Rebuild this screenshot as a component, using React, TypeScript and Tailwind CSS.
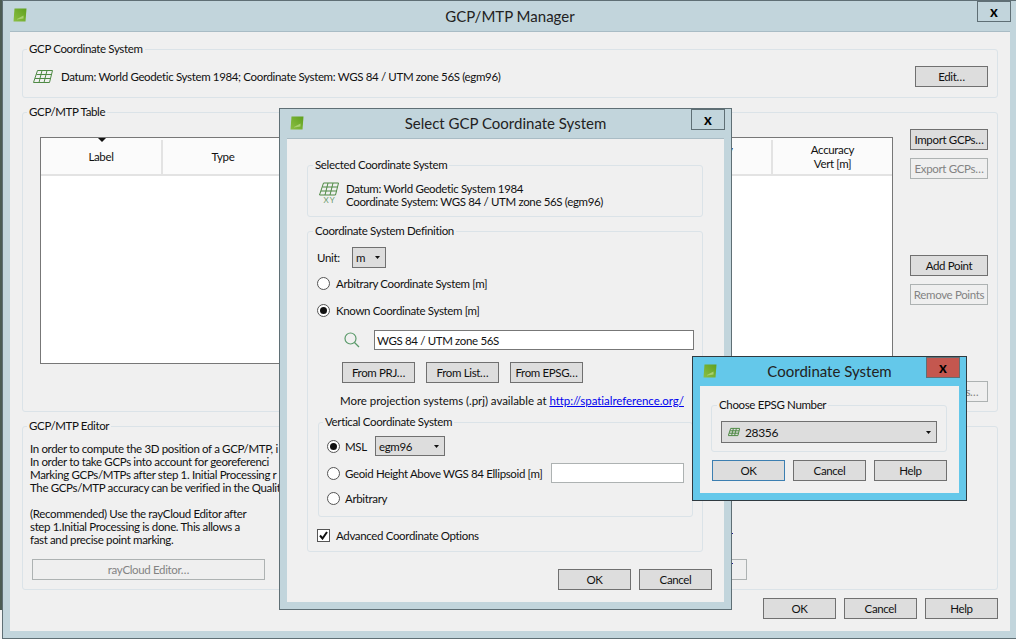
import type { ReactNode } from "react";

function Logo() {
  return (
    <svg width="14" height="14" viewBox="0 0 14 14" className="shrink-0">
      <defs>
        <linearGradient id="lg" x1="0" y1="1" x2="1" y2="0">
          <stop offset="0" stopColor="#8cbf45" />
          <stop offset="1" stopColor="#5fa01e" />
        </linearGradient>
      </defs>
      <polygon points="1.5,0.5 13.5,0.5 12.5,13.5 0.5,13.5" fill="url(#lg)" />
      <polygon points="4,11 10.5,7.5 10.5,10.5 4,11.5" fill="#a8d070" />
    </svg>
  );
}

function GridIcon({ w = 20, h = 13 }: { w?: number; h?: number }) {
  return (
    <svg width={w} height={h} viewBox="0 0 20 13" className="shrink-0" fill="none" stroke="#4f8a45" strokeWidth="1">
      <path vectorEffect="non-scaling-stroke" d="M4.5 .5H19.5L16.5 12.5H.5Z" />
      <path vectorEffect="non-scaling-stroke" d="M3.5 4.5H18.5M2 8.5H17.5M9 .5L6 12.5M14 .5L11 12.5" />
    </svg>
  );
}

function Arrow() {
  return (
    <svg width="5" height="3" viewBox="0 0 5 3" className="shrink-0">
      <polygon points="0,0 5,0 2.5,3" fill="#111" />
    </svg>
  );
}

function Btn(props: { children?: ReactNode; w?: string; disabled?: boolean; focus?: boolean }) {
  const { children, w = "w-[73px]", disabled, focus } = props;
  const tone = disabled
    ? "border-[#adb2b2] bg-[#efefef] text-[#838383]"
    : focus
      ? "border-[#3c7fb1] bg-[#dddddd] text-[#111]"
      : "border-[#707070] bg-[#dddddd] text-[#111]";
  return (
    <div className={`flex h-[21px] shrink-0 items-center justify-center whitespace-nowrap border ${w} ${tone}`}>
      {children}
    </div>
  );
}

function Group(props: { title: string; className?: string; legend?: string; children: ReactNode }) {
  return (
    <fieldset className={`relative min-w-0 rounded-[3px] border border-[#dbe3e8] ${props.className ?? ""}`}>
      <legend className={`h-4 px-[2px] leading-4 ${props.legend ?? "ml-[4px]"}`}>{props.title}</legend>
      {props.children}
    </fieldset>
  );
}

function Radio({ checked }: { checked?: boolean }) {
  return (
    <span className="flex h-[13px] w-[13px] shrink-0 items-center justify-center rounded-full border border-[#555] bg-white">
      {checked && <span className="h-[7px] w-[7px] rounded-full bg-[#111]" />}
    </span>
  );
}

function Combo({ label, w }: { label: string; w: string }) {
  return (
    <div className={`flex items-center justify-between border border-[#707070] bg-[#dddddd] pl-[3px] pr-[5px] ${w}`}>
      <span>{label}</span>
      <Arrow />
    </div>
  );
}

function Close({ red }: { red?: boolean }) {
  return (
    <div
      className={`flex h-[21px] w-[34px] items-center justify-center border border-[#5f6f75] text-[15px] font-bold leading-none text-black ${
        red ? "bg-[#c4574f]" : "bg-[#c2d5dc]"
      }`}
    >
      x
    </div>
  );
}

const columns = [["Label"], ["Type"], [], [], [], ["Accuracy", "Hor [m]"], ["Accuracy", "Vert [m]"]];

export default function App() {
  return (
    <div className="relative h-[639px] w-[1016px] overflow-hidden bg-[#f4f4f4] font-['Lato',sans-serif] text-[11.5px] leading-[13px] tracking-[-0.35px] text-[#111]">
      <div className="absolute left-0 top-0 h-[610px] w-[2px] bg-[#4c5c54]" />

      {/* main window */}
      <div className="absolute left-[2px] top-0 flex h-[639px] w-[1014px] flex-col border-y border-l border-[#5f6f75] bg-[#c2d5dc] pb-[7px] pl-[7px] pr-[6px]">
        <div className="relative flex h-[30px] shrink-0 items-center justify-center text-[15px] tracking-normal">
          <div className="absolute left-[3px] top-[7px]">
            <Logo />
          </div>
          <span className="text-[#222]">GCP/MTP Manager</span>
          <div className="absolute right-[-1px] top-0">
            <Close />
          </div>
        </div>
        <div className="flex flex-1 flex-col border-t border-[#a9bcc5] bg-[#f0f0f0] px-3 pt-[9px]">
          <Group title="GCP Coordinate System" className="h-[57px] shrink-0">
            <div className="flex items-start justify-between pr-[9px] pt-[9px]">
              <div className="flex items-center gap-[8px] pl-[10px] pt-[4px]">
                <GridIcon />
                <span className="whitespace-nowrap">
                  Datum: World Geodetic System 1984; Coordinate System: WGS 84 / UTM zone 56S (egm96)
                </span>
              </div>
              <Btn>Edit…</Btn>
            </div>
          </Group>

          <Group title="GCP/MTP Table" className="mt-[6px] h-[308px] shrink-0">
            <div className="flex justify-between pl-[17px] pr-[9px]">
              <div className="mt-[17px] h-[227px] w-[853px] border border-[#777] bg-white">
                <div className="relative grid h-[38px] grid-cols-[repeat(6,122px)_1fr] border-b-2 border-[#e3e3e3] bg-[#fbfbfb] pt-[2px]">
                  {columns.map((c, i) => (
                    <div
                      key={i}
                      className={`flex flex-col items-center justify-center leading-[14px] ${i < 6 ? "border-r-2 border-[#e3e3e3]" : ""}`}
                    >
                      {c.map((t) => (
                        <span key={t}>{t}</span>
                      ))}
                    </div>
                  ))}
                  <svg width="8" height="4" viewBox="0 0 8 4" className="absolute left-[57px] top-0">
                    <polygon points="0,0 8,0 4,4" fill="#111" />
                  </svg>
                </div>
              </div>
              <div className="flex w-[78px] flex-col pt-[9px]">
                <Btn w="w-[78px]">Import GCPs…</Btn>
                <div className="mt-2">
                  <Btn w="w-[78px]" disabled>
                    Export GCPs…
                  </Btn>
                </div>
                <div className="mt-[76px]">
                  <Btn w="w-[78px]">Add Point</Btn>
                </div>
                <div className="mt-2">
                  <Btn w="w-[78px]" disabled>
                    Remove Points
                  </Btn>
                </div>
                <div className="mt-[76px] flex justify-end">
                  <Btn w="w-[78px]" disabled>
                    Edit Marks…
                  </Btn>
                </div>
              </div>
            </div>
          </Group>

          <Group title="GCP/MTP Editor" className="mt-[6px] h-[172px] shrink-0">
            <div className="w-[262px] overflow-hidden whitespace-nowrap pl-[7px] pt-[8px]">
              <p>In order to compute the 3D position of a GCP/MTP, i</p>
              <p>In order to take GCPs into account for georeferenci</p>
              <p>Marking GCPs/MTPs after step 1. Initial Processing r</p>
              <p>The GCPs/MTP accuracy can be verified in the Qualit</p>
              <p className="mt-[13px]">(Recommended) Use the rayCloud Editor after</p>
              <p>step 1.Initial Processing is done. This allows a</p>
              <p>fast and precise point marking.</p>
            </div>
            <div className="mt-[13px] flex justify-between pl-[9px] pr-[250px]">
              <Btn w="w-[233px]" disabled>
                rayCloud Editor…
              </Btn>
              <Btn w="w-[233px]" disabled />
            </div>
            <span className="absolute left-[709px] top-[99px] h-px w-px bg-[#1a1a8c]" />
            <span className="absolute left-[709px] top-[129px] h-px w-px bg-[#1a1a8c]" />
          </Group>

          <div className="mt-2 flex justify-end gap-2">
            <Btn>OK</Btn>
            <Btn>Cancel</Btn>
            <Btn>Help</Btn>
          </div>
        </div>
      </div>

      {/* Select GCP Coordinate System dialog */}
      <div className="absolute left-[279px] top-[108px] flex h-[502px] w-[453px] flex-col border border-[#5f6f75] bg-[#c2d5dc] pb-[7px] pl-[7px] pr-[7px]">
        <div className="relative flex h-[29px] shrink-0 items-center justify-center text-[15px] tracking-normal">
          <div className="absolute left-[3px] top-[7px]">
            <Logo />
          </div>
          <span className="text-[#222]">Select GCP Coordinate System</span>
          <div className="absolute right-[-1px] top-0">
            <Close />
          </div>
        </div>
        <div className="flex flex-1 flex-col border-t border-[#a9bcc5] bg-[#f0f0f0] pl-[20px] pr-[12px] pt-[18px]">
          <Group title="Selected Coordinate System" legend="ml-[5px]" className="mr-[9px] h-[60px] shrink-0">
            <div className="flex items-start gap-[7px] pl-[11px] pt-[9px]">
              <div className="flex w-[20px] flex-col items-center">
                <GridIcon w={20} h={14} />
                <span className="text-[8px] leading-[8px] text-[#6a9a6a]">X Y</span>
              </div>
              <div className="whitespace-nowrap">
                <p>Datum: World Geodetic System 1984</p>
                <p>Coordinate System: WGS 84 / UTM zone 56S (egm96)</p>
              </div>
            </div>
          </Group>

          <Group title="Coordinate System Definition" legend="ml-[5px]" className="mr-[9px] mt-[6px] h-[329px] shrink-0">
            <div className="flex flex-col pl-[9px]">
              <div className="mt-2 flex h-[21px] items-center">
                <span className="w-[35px]">Unit:</span>
                <Combo label="m" w="h-[21px] w-[34px]" />
              </div>
              <div className="mt-[7px] flex h-4 items-center gap-[6px]">
                <Radio />
                <span>Arbitrary Coordinate System [m]</span>
              </div>
              <div className="mt-[11px] flex h-4 items-center gap-[6px]">
                <Radio checked />
                <span>Known Coordinate System [m]</span>
              </div>
              <div className="mt-3 flex h-[20px] items-center pl-[27px]">
                <svg width="16" height="16" viewBox="0 0 16 16" fill="none" stroke="#5a9a6a" strokeWidth="1.2">
                  <circle cx="6.5" cy="6.5" r="5.5" />
                  <path d="M10.5 10.5L15 15" />
                </svg>
                <div className="ml-[14px] flex h-[20px] w-[320px] items-center border border-[#777] bg-white pl-[2px]">
                  WGS 84 / UTM zone 56S
                </div>
              </div>
              <div className="mt-3 flex gap-[11px] pl-[25px]">
                <Btn>From PRJ…</Btn>
                <Btn>From List…</Btn>
                <Btn>From EPSG…</Btn>
              </div>
              <div className="mt-[9px] flex h-4 items-center whitespace-nowrap pl-[23px] tracking-[-0.05px]">
                More projection systems (.prj) available at&nbsp;
                <span className="text-[#0000ee] underline">http://spatialreference.org/</span>
              </div>
              <Group title="Vertical Coordinate System" className="ml-px mr-[9px] mt-[6px] h-[103px]">
                <div className="flex flex-col pl-[8px]">
                  <div className="mt-[6px] flex h-[20px] items-center">
                    <Radio checked />
                    <span className="ml-[5px] w-[30px]">MSL</span>
                    <Combo label="egm96" w="h-[20px] w-[70px]" />
                  </div>
                  <div className="mt-[7px] flex h-[20px] items-center">
                    <Radio />
                    <span className="ml-[5px] w-[206px] whitespace-nowrap">Geoid Height Above WGS 84 Ellipsoid [m]</span>
                    <div className="h-[20px] w-[133px] border border-[#adb2b2] bg-white" />
                  </div>
                  <div className="mt-[7px] flex h-4 items-center gap-[5px]">
                    <Radio />
                    <span>Arbitrary</span>
                  </div>
                </div>
              </Group>
              <div className="mt-[10px] flex h-4 items-center gap-[6px]">
                <span className="flex h-[13px] w-[13px] items-center justify-center border border-[#555] bg-white">
                  <svg width="9" height="9" viewBox="0 0 9 9" fill="none" stroke="#111" strokeWidth="2">
                    <path d="M1 4.5L3.5 7.5L8 1" />
                  </svg>
                </span>
                <span>Advanced Coordinate Options</span>
              </div>
            </div>
          </Group>

          <div className="mt-[17px] flex justify-end gap-2">
            <Btn>OK</Btn>
            <Btn>Cancel</Btn>
          </div>
        </div>
      </div>

      {/* Coordinate System dialog */}
      <div className="absolute left-[692px] top-[356px] flex h-[145px] w-[275px] flex-col border border-[#303a40] bg-[#64c8ea] pb-[7px] pl-[7px] pr-[7px]">
        <div className="relative flex h-[29px] shrink-0 items-center justify-center text-[15px] tracking-normal">
          <div className="absolute left-[3px] top-[7px]">
            <Logo />
          </div>
          <span className="text-[#222]">Coordinate System</span>
          <div className="absolute right-[-1px] top-0">
            <Close red />
          </div>
        </div>
        <div className="flex flex-1 flex-col bg-[#f0f0f0] px-3 pt-[11px]">
          <Group title="Choose EPSG Number" legend="ml-[5px]" className="ml-[-1px] h-[55px] shrink-0">
            <div className="mx-[9px] mt-2 flex h-[22px] items-center justify-between border border-[#707070] bg-[#dddddd] pl-[6px] pr-[5px]">
              <span className="flex items-center gap-[5px]">
                <GridIcon w={12} h={10} />
                <span className="text-[12px]">28356</span>
              </span>
              <Arrow />
            </div>
          </Group>
          <div className="mt-2 flex justify-between">
            <Btn focus>OK</Btn>
            <Btn>Cancel</Btn>
            <Btn>Help</Btn>
          </div>
        </div>
      </div>
    </div>
  );
}
